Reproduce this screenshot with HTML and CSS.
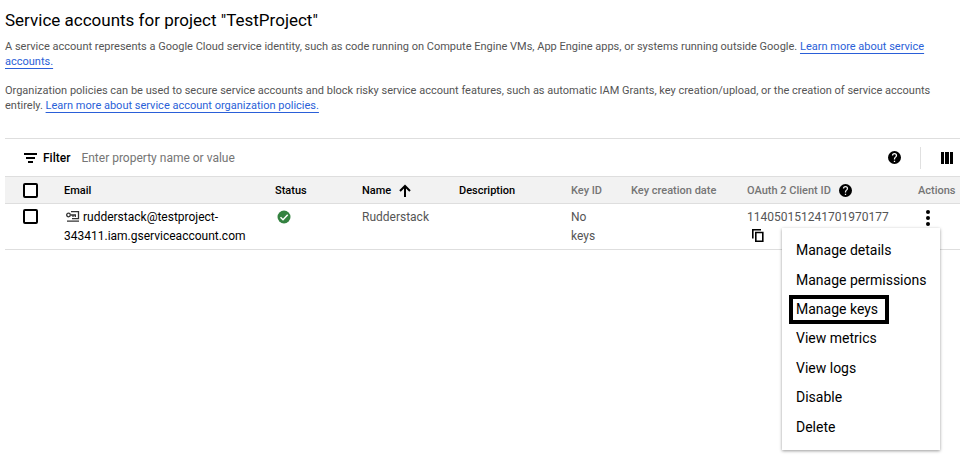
FILE: index.html
```html
<!DOCTYPE html>
<html lang="en">
<head>
  <meta charset="UTF-8">
  <meta name="viewport" content="width=device-width, initial-scale=1.0">
  <title>Service accounts</title>
  <link rel="stylesheet" href="styles.css">
</head>
<body>
  <main>
    <header class="intro">
      <h1>Service accounts for project "TestProject"</h1>
      <p>A service account represents a Google Cloud service identity, such as code running on Compute Engine VMs, App Engine apps, or systems running outside Google. <a href="#">Learn more about service accounts.</a></p>
      <p>Organization policies can be used to secure service accounts and block risky service account features, such as automatic IAM Grants, key creation/upload, or the creation of service accounts entirely. <a href="#">Learn more about service account organization policies.</a></p>
    </header>

    <section class="accounts">
      <div class="toolbar">
        <svg class="filter-icon" viewBox="0 0 13 10"><path d="M0 0h13v2H0zM2 4h9v2H2zM4 8h5v2H4z"/></svg>
        <label for="filter">Filter</label>
        <input class="filter-input" type="text" id="filter" placeholder="Enter property name or value">
        <button class="icon-button" aria-label="Help">
          <svg class="help" viewBox="2 2 20 20"><path d="M12 2a10 10 0 1 0 0 20 10 10 0 0 0 0-20zm1 17h-2v-2h2zm2.07-7.75-.9.92C13.45 12.9 13 13.5 13 15h-2v-.5c0-1.1.45-2.1 1.17-2.83l1.24-1.26c.37-.36.59-.86.59-1.41a2 2 0 0 0-4 0H8a4 4 0 0 1 8 0c0 .88-.36 1.68-.93 2.25z"/></svg>
        </button>
        <button class="icon-button columns-button" aria-label="Column display options">
          <svg class="columns" viewBox="0 0 12 12"><path d="M0 0h3v12H0zM4 0h4v12H4zM9 0h3v12H9z"/></svg>
        </button>
      </div>

      <table>
        <colgroup>
          <col class="col-check">
          <col class="col-email">
          <col class="col-status">
          <col class="col-name">
          <col class="col-description">
          <col class="col-key">
          <col class="col-date">
          <col class="col-client">
          <col class="col-actions">
        </colgroup>
        <thead>
          <tr>
            <th class="check"><input type="checkbox" aria-label="Select all"></th>
            <th>Email</th>
            <th>Status</th>
            <th>
              <span class="with-icon">Name
                <svg class="sort" viewBox="0 0 12 13"><path d="M6 13V2M1 7l5-5 5 5" fill="none" stroke="#000" stroke-width="2"/></svg>
              </span>
            </th>
            <th>Description</th>
            <th class="muted">Key ID</th>
            <th class="muted">Key creation date</th>
            <th class="muted">
              <span class="with-icon">OAuth 2 Client ID
                <svg class="help" viewBox="2 2 20 20"><path d="M12 2a10 10 0 1 0 0 20 10 10 0 0 0 0-20zm1 17h-2v-2h2zm2.07-7.75-.9.92C13.45 12.9 13 13.5 13 15h-2v-.5c0-1.1.45-2.1 1.17-2.83l1.24-1.26c.37-.36.59-.86.59-1.41a2 2 0 0 0-4 0H8a4 4 0 0 1 8 0c0 .88-.36 1.68-.93 2.25z"/></svg>
              </span>
            </th>
            <th class="muted">Actions</th>
          </tr>
        </thead>
        <tbody>
          <tr>
            <td class="check"><input type="checkbox" aria-label="Select rudderstack"></td>
            <td class="email">
              <svg class="key" viewBox="0 0 14 11" fill="none" stroke="#333" stroke-width="1.3"><circle cx="2.500" cy="4" r="1.800"/><path d="M4.500 4h5.500M7 4v2M9.300 4v2M5 .7h7.500v7H6M1 10.200h12"/></svg>
              rudderstack@testproject-<wbr>343411.iam.gserviceaccount.com
            </td>
            <td>
              <svg class="status" viewBox="0 0 14 14"><circle cx="7" cy="7" r="6.500" fill="#348240"/><path d="M3.500 7.300 6 9.700l4.700-4.900" fill="none" stroke="#fff" stroke-width="1.500"/></svg>
            </td>
            <td>Rudderstack</td>
            <td></td>
            <td class="key-id">No keys</td>
            <td></td>
            <td>
              114050151241701970177
              <button class="icon-button copy-button" aria-label="Copy client ID">
                <svg class="copy" viewBox="0 0 12 13" fill="none" stroke="#000" stroke-width="1.600"><path d="M.8 9.500V.8H9M3.800 3.500h7v8.700h-7z"/></svg>
              </button>
            </td>
            <td>
              <div class="actions">
                <button class="icon-button more-button" aria-label="Actions">
                  <svg class="more" viewBox="0 0 4 16"><circle cx="2" cy="2" r="2"/><circle cx="2" cy="8" r="2"/><circle cx="2" cy="14" r="2"/></svg>
                </button>
                <div class="menu">
                  <button>Manage details</button>
                  <button>Manage permissions</button>
                  <button class="selected">Manage keys</button>
                  <button>View metrics</button>
                  <button>View logs</button>
                  <button>Disable</button>
                  <button>Delete</button>
                </div>
              </div>
            </td>
          </tr>
        </tbody>
      </table>
    </section>
  </main>
</body>
</html>
```

FILE: styles.css
```css
* {
  box-sizing: border-box;
}

body {
  margin: 0;
  background: #fff;
  color: #000;
  font-family: Roboto, Arial, sans-serif;
  font-size: 12px;
}

main {
  min-height: 100vh;
  padding: 10px 0 0 5px;
}

.intro {
  padding-right: 20px;
}

h1 {
  margin: 0 0 9px;
  font-size: 17px;
  font-weight: 400;
  line-height: 20px;
}

p {
  margin: 0 0 14px;
  color: #555;
  font-size: 11px;
  line-height: 15px;
}

a {
  color: #2a5fd8;
  text-decoration: underline;
  text-decoration-skip-ink: none;
  text-underline-offset: 3px;
}

button {
  padding: 0;
  border: 0;
  background: none;
  color: inherit;
  font: inherit;
  cursor: pointer;
}

svg {
  display: block;
}

.accounts {
  margin-top: 25px;
  border-top: 1px solid #dedede;
}

.toolbar {
  display: flex;
  align-items: center;
  height: 37px;
  padding-left: 19px;
}

.toolbar label {
  margin: 0 11px 0 6px;
  font-weight: 500;
}

.filter-icon {
  width: 13px;
  height: 10px;
}

.filter-input {
  flex: 1;
  min-width: 0;
  padding: 0;
  border: 0;
  outline: none;
  font: inherit;
}

.filter-input::placeholder {
  color: #757575;
}

.help {
  width: 13px;
  height: 13px;
}

.columns-button {
  margin-left: 19px;
  padding: 5px 7px 5px 20px;
  border-left: 1px solid #e0e0e0;
}

.columns {
  width: 12px;
  height: 12px;
}

table {
  width: 100%;
  table-layout: fixed;
  border-collapse: collapse;
}

.col-check { width: 59px; }
.col-status { width: 87px; }
.col-name { width: 97px; }
.col-description { width: 112px; }
.col-key { width: 60px; }
.col-date { width: 116px; }
.col-client { width: 171px; }
.col-actions { width: 42px; }

th {
  height: 27px;
  padding: 0;
  border-top: 1px solid #dedede;
  border-bottom: 1px solid #dedede;
  background: #f2f2f2;
  font-size: 11px;
  font-weight: 500;
  text-align: left;
  white-space: nowrap;
}

th.muted {
  color: #757575;
}

td {
  padding: 4px 0 3px;
  border-bottom: 1px solid #dedede;
  color: #555;
  line-height: 19px;
  vertical-align: top;
}

.check {
  padding-left: 18px;
}

.check input {
  display: block;
  width: 15px;
  height: 15px;
  margin: 0;
  border: 2px solid #000;
  border-radius: 2px;
  background: #fff;
  appearance: none;
}

td.check {
  padding-top: 5px;
}

.with-icon {
  display: flex;
  align-items: center;
  gap: 8px;
}

.sort {
  width: 12px;
  height: 13px;
}

.email {
  color: #000;
}

.key-id {
  padding-right: 24px;
}

.key {
  display: inline-block;
  width: 14px;
  height: 11px;
  margin-left: 2px;
  vertical-align: -1px;
}

.status {
  width: 14px;
  height: 14px;
  margin: 2px;
}

.copy-button {
  display: block;
  margin: 2px 5px 0;
}

.copy {
  width: 12px;
  height: 13px;
}

.actions {
  position: relative;
}

.more-button {
  display: block;
  margin: 2px 8px;
}

.more {
  width: 4px;
  height: 16px;
}

.menu {
  position: absolute;
  top: 18px;
  right: 20px;
  display: grid;
  grid-template-rows: repeat(7, 1fr);
  justify-items: start;
  width: 158px;
  height: 222px;
  padding: 8px 7px;
  background: #fff;
  box-shadow: 0 1px 3px rgba(0, 0, 0, .4);
  color: #000;
  font-size: 14px;
}

.menu button {
  padding: 0 7px;
  white-space: nowrap;
}

.menu .selected {
  padding: 0 7px 0 3px;
  border: 4px solid #000;
}
```
